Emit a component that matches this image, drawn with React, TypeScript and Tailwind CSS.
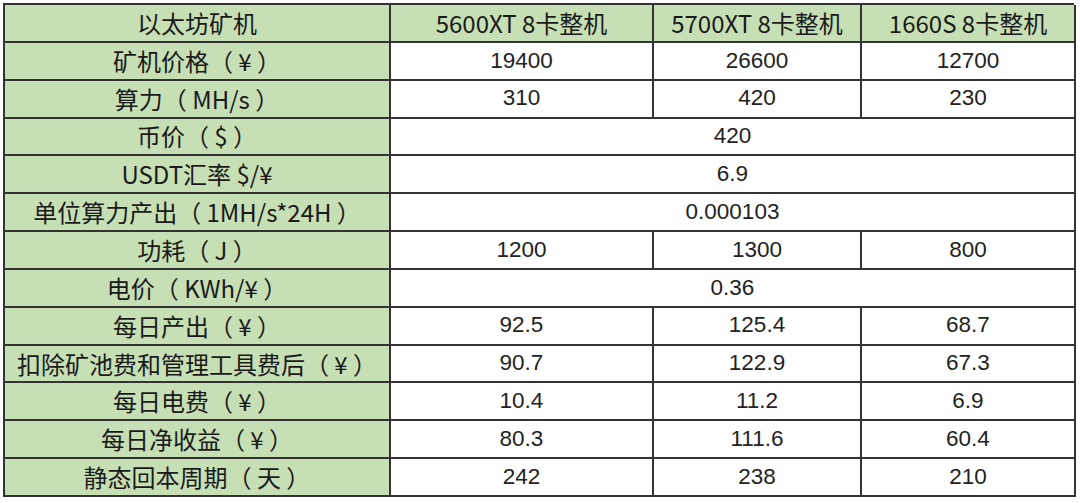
import React from 'react'

type Row = { label: string; values: string[] }

const header = ['以太坊矿机', '5600XT 8卡整机', '5700XT 8卡整机', '1660S 8卡整机']

const rows: Row[] = [
  { label: '矿机价格（ ¥ ）', values: ['19400', '26600', '12700'] },
  { label: '算力（ MH/s ）', values: ['310', '420', '230'] },
  { label: '币价（ $ ）', values: ['420'] },
  { label: 'USDT汇率 $/¥', values: ['6.9'] },
  { label: '单位算力产出（ 1MH/s*24H ）', values: ['0.000103'] },
  { label: '功耗（ J ）', values: ['1200', '1300', '800'] },
  { label: '电价（ KWh/¥ ）', values: ['0.36'] },
  { label: '每日产出（ ¥ ）', values: ['92.5', '125.4', '68.7'] },
  { label: '扣除矿池费和管理工具费后（ ¥ ）', values: ['90.7', '122.9', '67.3'] },
  { label: '每日电费（ ¥ ）', values: ['10.4', '11.2', '6.9'] },
  { label: '每日净收益（ ¥ ）', values: ['80.3', '111.6', '60.4'] },
  { label: '静态回本周期（ 天 ）', values: ['242', '238', '210'] },
]

const greenCell =
  "flex items-center justify-center whitespace-pre bg-[#c6dfb4] border-r-2 border-b-2 border-[#333] font-['Noto_Sans_CJK_SC','Noto_Sans',sans-serif] text-[24px] leading-none text-[#1a1a1a]"
const valueCell =
  "flex items-center justify-center bg-white border-r-2 border-b-2 border-[#333] font-['Liberation_Sans',Arial,sans-serif] text-[22.5px] leading-none text-[#222]"

export default function App() {
  return (
    <div className="w-[1080px] h-[503px] bg-white pt-[3px] pl-[3px]">
      <div className="grid w-[1071px] grid-cols-[386px_263px_208px_214px] grid-rows-[repeat(13,37.85px)] border-l-2 border-t-2 border-[#333]">
        {header.map((h) => (
          <div key={h} className={greenCell}>
            {h}
          </div>
        ))}
        {rows.map((r) => (
          <React.Fragment key={r.label}>
            <div className={greenCell}>{r.label}</div>
            {r.values.length === 1 ? (
              <div className={`${valueCell} col-span-3`}>{r.values[0]}</div>
            ) : (
              r.values.map((v, i) => (
                <div key={i} className={valueCell}>
                  {v}
                </div>
              ))
            )}
          </React.Fragment>
        ))}
      </div>
    </div>
  )
}
